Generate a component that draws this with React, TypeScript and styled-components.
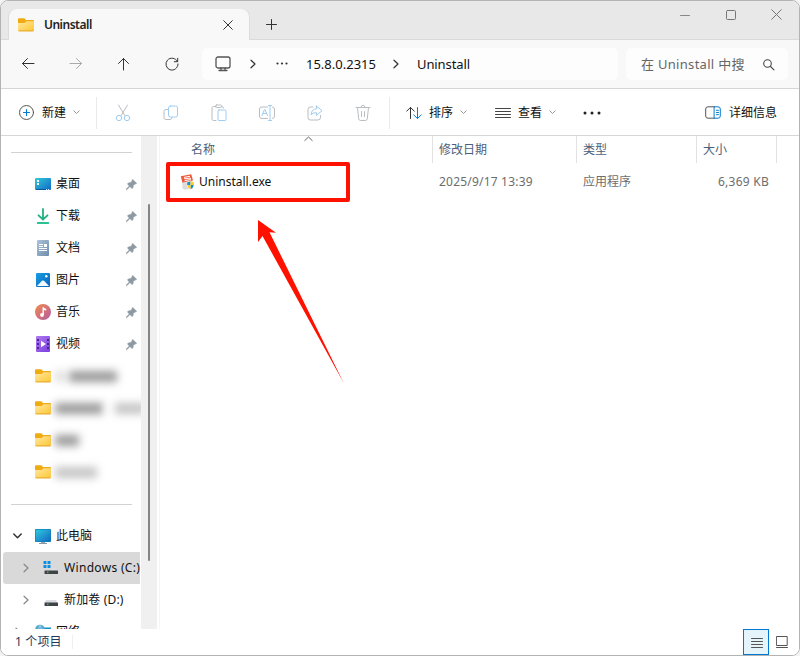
import React from "react";
import styled, { createGlobalStyle } from "styled-components";

const Global = createGlobalStyle`
  * { box-sizing: border-box; }
  html, body { margin: 0; padding: 0; background: #f4f4f4; }
  body { font-family: "Noto Sans", "Noto Sans CJK SC", sans-serif; font-size: 12px; color: #111; overflow: hidden; }
  svg { display: block; flex: none; }
`;

const Window = styled.div`
  position: relative;
  width: 800px;
  height: 656px;
  display: flex;
  flex-direction: column;
  border: 1px solid #b3b3b3;
  border-radius: 8px;
  background: #fff;
  overflow: hidden;
`;

const Text = styled.span<{ $size?: number; $color?: string; $space?: number; $weight?: number }>`
  font-size: ${(p) => p.$size ?? 12}px;
  color: ${(p) => p.$color ?? "#111"};
  letter-spacing: ${(p) => p.$space ?? 0}px;
  font-weight: ${(p) => p.$weight ?? 400};
  line-height: 20px;
  white-space: nowrap;
`;

/* Title strip */
const TitleBar = styled.div`
  display: flex;
  flex: none;
  height: 39px;
  background: #e8e8e8;
  box-shadow: inset 0 -1px #dadada;
  padding-left: 8px;
`;
const Tab = styled.div`
  display: flex;
  align-items: center;
  width: 240px;
  height: 31px;
  margin-top: 8px;
  padding: 0 16px 0 9px;
  border-radius: 8px 8px 0 0;
  background: #f8f8f8;
  box-shadow: 1px 0 #dcdcdc, -1px 0 #dcdcdc;
  gap: 10px;
`;
const TabTitle = styled.div`
  flex: 1;
  display: flex;
`;
const AddTab = styled.div`
  margin: 18px 0 0 17px;
`;
const WindowControls = styled.div`
  display: flex;
  gap: 34px;
  margin: 8px 17px 0 auto;
`;

/* Navigation */
const NavBar = styled.div`
  display: flex;
  flex: none;
  align-items: center;
  height: 49px;
  background: #f8f8f8;
  border-bottom: 1px solid #d5d5d5;
`;
const NavButtons = styled.div`
  display: flex;
  width: 201px;
  padding-left: 19px;
  gap: 32px;
`;
const Address = styled.div`
  display: flex;
  align-items: center;
  width: 416px;
  height: 32px;
  padding-left: 13px;
  border-radius: 5px;
  background: #fdfdfd;
`;
const Crumb = styled.div<{ $w: number }>`
  display: flex;
  flex: none;
  align-items: center;
  width: ${(p) => p.$w}px;
`;
const Search = styled.div`
  display: flex;
  align-items: center;
  justify-content: space-between;
  width: 162px;
  height: 32px;
  margin-left: 8px;
  padding: 0 13px 0 15px;
  border-radius: 5px;
  background: #fdfdfd;
`;

/* Commands */
const Toolbar = styled.div`
  display: flex;
  flex: none;
  align-items: center;
  height: 47px;
  border-bottom: 1px solid #d6d6d6;
  padding: 1px 22px 0 0;
`;
const Command = styled.div<{ $w?: number; $pad?: number; $gap?: number }>`
  display: flex;
  flex: none;
  align-items: center;
  gap: ${(p) => p.$gap ?? 7}px;
  width: ${(p) => (p.$w ? `${p.$w}px` : "auto")};
  padding-left: ${(p) => p.$pad ?? 0}px;
`;
const Caption = styled.div`
  display: flex;
  padding-top: 1px;
`;
const ToolDivider = styled.div`
  width: 1px;
  height: 32px;
  background: #eaeaea;
`;
const EditTools = styled.div`
  display: flex;
  width: 292px;
  justify-content: space-between;
  padding: 1px 17px 0 17px;
`;
const Details = styled.div`
  display: flex;
  align-items: center;
  gap: 8px;
  margin-left: auto;
`;

/* Body */
const Body = styled.div`
  display: flex;
  height: 493px;
  flex: none;
`;
const Sidebar = styled.div`
  width: 140px;
  overflow: hidden;
  flex: none;
`;
const Separator = styled.div`
  height: 32px;
  padding: 16px 9px 0 10px;
  &::before { content: ""; display: block; height: 1px; background: #d2d2d2; }
`;
const PlaceRow = styled.div<{ $selected?: boolean; $pad?: number; $gap?: number }>`
  display: flex;
  align-items: center;
  height: 32px;
  margin: 0 1px 0 2px;
  padding-left: ${(p) => p.$pad ?? 32}px;
  gap: ${(p) => p.$gap ?? 5}px;
  border-radius: 3px 0 0 3px;
  background: ${(p) => (p.$selected ? "#d9d9d9" : "transparent")};
  white-space: nowrap;
`;
const PinSlot = styled.div`
  margin: 1px 3px 0 auto;
`;
const Smudge = styled.div<{ $w: number; $tone: string }>`
  width: ${(p) => p.$w}px;
  height: 11px;
  background: ${(p) => p.$tone};
  filter: blur(4px);
  flex: none;
`;
const ScrollTrack = styled.div`
  display: flex;
  width: 16px;
  padding: 68px 0 0 7px;
  background: #f0f0f0;
  flex: none;
`;
const ScrollThumb = styled.div`
  width: 2px;
  height: 357px;
  border-radius: 1px;
  background: #858585;
`;
const Files = styled.div`
  flex: 1;
  margin-left: 2px;
  border-left: 1px solid #f5f5f5;
`;
const Header = styled.div`
  position: relative;
  display: grid;
  grid-template-columns: 273px 144px 120px 80px;
  height: 27px;
`;
const HeaderCell = styled.div<{ $pad?: number }>`
  display: flex;
  align-items: center;
  padding-left: ${(p) => p.$pad ?? 6}px;
  border-right: 1px solid #e2e2e2;
`;
const SortMark = styled.div`
  position: absolute;
  left: 144px;
  top: 0;
`;
const FileRow = styled.div`
  display: grid;
  grid-template-columns: 273px 144px 120px 80px;
  align-items: center;
  height: 32px;
  margin-top: 3px;
`;
const FileCell = styled.div<{ $pad?: number; $end?: boolean }>`
  display: flex;
  align-items: center;
  gap: 3px;
  padding-left: ${(p) => p.$pad ?? 6}px;
  padding-right: ${(p) => (p.$end ? 8 : 0)}px;
  justify-content: ${(p) => (p.$end ? "flex-end" : "flex-start")};
`;
const Highlight = styled.div`
  position: absolute;
  left: 165px;
  top: 161px;
  width: 184px;
  height: 40px;
  border: 4px solid #ff1100;
  border-radius: 2px;
`;
const Pointer = styled.svg`
  position: absolute;
  left: 256px;
  top: 217px;
`;

/* Status */
const StatusBar = styled.div`
  display: flex;
  height: 26px;
  align-items: center;
  padding-left: 14px;
  background: #fff;
`;
const StatusDivider = styled.div`
  width: 1px;
  height: 14px;
  margin-left: 10px;
  background: #efefef;
`;
const ViewButton = styled.div<{ $active?: boolean }>`
  display: flex;
  align-items: center;
  justify-content: center;
  width: 26px;
  height: 26px;
  padding-left: ${(p) => (p.$active ? 2 : 0)}px;
  background: ${(p) => (p.$active ? "#e5f3fb" : "transparent")};
  border: ${(p) => (p.$active ? "1px solid #0078d4" : "none")};
`;
const Views = styled.div`
  display: flex;
  margin-left: auto;
  padding-right: 4px;
`;

type IconProps = { w?: number; h?: number; c?: string; sw?: number; children: React.ReactNode };
const Icon = ({ w = 18, h = w, c = "#333", sw = 1, children }: IconProps) => (
  <svg width={w} height={h} viewBox={`0 0 ${w} ${h}`} fill="none" stroke={c} strokeWidth={sw} strokeLinecap="round" strokeLinejoin="round">
    {children}
  </svg>
);

const Folder = () => (
  <svg width="16" height="14" viewBox="0 0 16 14">
    <defs>
      <linearGradient id="folder" x1="0" y1="0" x2="1" y2="1">
        <stop offset="0" stopColor="#ffe7a0" />
        <stop offset="1" stopColor="#ffc832" />
      </linearGradient>
    </defs>
    <path d="M0 1.3Q0 .3 1 .3h5.400L8 2h7q1 0 1 1v3H0z" fill="#f0ab13" />
    <path d="M0 5h6.600L8.300 3.200H16v9q0 1-1 1H1q-1 0-1-1z" fill="url(#folder)" />
    <path d="M.6 12.900h14.800" stroke="#e0a326" strokeWidth=".9" />
  </svg>
);
const Chevron = ({ c = "#999" }: { c?: string }) => (
  <Icon w={7} h={5} c={c}><path d="M.8.8l2.700 2.700L6.200.8" /></Icon>
);
const Right = ({ c = "#333", s = 1.2 }: { c?: string; s?: number }) => (
  <Icon w={6} h={10} c={c} sw={s}><path d="M1 1.200l4 3.800-4 3.800" /></Icon>
);
const Pin = () => (
  <svg width="11" height="11" viewBox="0 0 11 11">
    <path d="M6.7.5l3.8 3.8-.9.6-.7-.1L7.2 6.6l-.2 2-.9.8-2.2-2L.9 10.5H.4V10l3-3L1.600 4.900l.8-.9 2.200-.2L6.300 2l-.2-.9z" fill="#8d99a3" stroke="#8d99a3" strokeWidth=".8" />
  </svg>
);
const Close = ({ s = 10, c = "#333" }: { s?: number; c?: string }) => (
  <Icon w={s} c={c}><path d={`M.7.7L${s - 0.7} ${s - 0.7}M${s - 0.7} .7L.7 ${s - 0.7}`} /></Icon>
);

const DesktopIcon = () => (
  <svg width="16" height="12" viewBox="0 0 16 12">
    <defs><linearGradient id="desk" x2="1" y2="1"><stop stopColor="#2fcbdc" /><stop offset="1" stopColor="#1268c4" /></linearGradient></defs>
    <rect width="16" height="12" rx="1" fill="url(#desk)" />
    <path d="M2 2h2v2H2zM2 5h2v2H2z" fill="#fff" />
    <path d="M1 11.5h10" stroke="#075a9e" /><path d="M11 11.5h4" stroke="#bfe6ff" strokeDasharray="1 1" />
  </svg>
);
const DownloadIcon = () => (
  <svg width="16" height="16" viewBox="0 0 16 16" fill="none" strokeLinecap="round" strokeLinejoin="round">
    <path d="M8 1v10.2M3.5 7.3L8 11.5l4.5-4.2" stroke="#21b183" strokeWidth="1.8" />
    <path d="M2.7 15h10.6" stroke="#2cc191" strokeWidth="1.8" />
  </svg>
);
const DocumentIcon = () => (
  <svg width="16" height="16" viewBox="0 0 16 16">
    <defs><linearGradient id="doc" x2="1" y2="1"><stop stopColor="#acc3da" /><stop offset="1" stopColor="#6e8cab" /></linearGradient></defs>
    <rect x="2" width="12" height="16" rx="1" fill="url(#doc)" />
    <path d="M4 4.5h4M4 6.500h4M4 8.500h8M4 10.500h8" stroke="#fff" /><path d="M9 4h3v3H9z" fill="#fff" />
  </svg>
);
const PictureIcon = () => (
  <svg width="16" height="14" viewBox="0 0 16 14">
    <defs><linearGradient id="pic" x2="1" y2="1"><stop stopColor="#189fe5" /><stop offset="1" stopColor="#0b62b8" /></linearGradient></defs>
    <rect x="1" width="14" height="14" rx="1" fill="url(#pic)" />
    <path d="M2 13l5-5.2q1-.8 2 0l5 5.2z" fill="#f0f9ff" /><circle cx="11.300" cy="3.300" r="1.200" fill="#fff" />
  </svg>
);
const MusicIcon = () => (
  <svg width="16" height="16" viewBox="0 0 16 16">
    <defs><linearGradient id="music" x2="1" y2="1"><stop stopColor="#f28b4b" /><stop offset="1" stopColor="#b35aa5" /></linearGradient></defs>
    <circle cx="8" cy="8" r="8" fill="url(#music)" />
    <circle cx="7" cy="11" r="1.9" fill="#fff" /><path d="M7.5 3.2h1.3q.2 1.3 2.4 1.5v1.7q-1.2 0-2.3-.7V11H7.5z" fill="#fff" />
  </svg>
);
const VideoIcon = () => (
  <svg width="16" height="16" viewBox="0 0 16 16">
    <defs><linearGradient id="vid" x2="1" y2="1"><stop stopColor="#b07bf0" /><stop offset="1" stopColor="#7b3bdc" /></linearGradient></defs>
    <rect x="1" width="14" height="16" rx="1" fill="url(#vid)" />
    <path d="M3 3v12M13 3v12" stroke="#43218d" strokeWidth="1.8" strokeDasharray="2 2" /><path d="M6 4.800v6.400L11 8z" fill="#fff" />
  </svg>
);
const PcIcon = () => (
  <svg width="16" height="16" viewBox="0 0 16 16">
    <path d="M6 12h4v3H6z" fill="#9aa8b5" /><path d="M4 15.5h8" stroke="#8797a6" />
    <rect y="1" width="16" height="13" rx=".8" fill="#0d7fb6" />
    <rect x=".7" y="1.700" width="14.600" height="11.600" fill="url(#desk)" />
  </svg>
);
const DriveIcon = ({ system = false }: { system?: boolean }) => (
  <svg width="16" height="15" viewBox="0 0 16 15">
    <path d="M3 7h10l1.500 3H1.500z" fill="#d9dce0" /><rect x="1.500" y="9.500" width="13.500" height="3.600" rx=".5" fill="#3f4348" />
    <path d="M4 11.200h1.500" stroke="#51e467" />
    {system && <><path d="M0 0h8v9H0z" fill="#d9d9d9" /><path d="M.5 0h3v3h-3zM4.500 0h3v3h-3zM.5 4h3v3h-3zM4.500 4h3v3h-3z" fill="#0d8fe0" /></>}
  </svg>
);
const NetworkIcon = () => (
  <svg width="16" height="16" viewBox="0 0 16 16">
    <rect x="4" y="3.500" width="12" height="9" fill="#138fc5" /><circle cx="5" cy="5.500" r="4.800" fill="#55a9cf" />
    <path d="M5 .7q-3 4.800 0 9.600M5 .7q3 4.800 0 9.600M.3 5.500h9.400" stroke="#b5e0ef" fill="none" strokeWidth=".7" />
  </svg>
);
const InstallerIcon = () => (
  <svg width="16" height="16" viewBox="0 0 16 16">
    <path d="M2 6.800L12 5l1 9.500-8 1.200-2.500-1z" fill="#dcdcdc" />
    <path d="M.8 2.200L11.300.2l1.700 6.300L2.400 8.600z" fill="#f0583a" />
    <path d="M10 2.300l-5.600 1 .4 1.600 5.400-.9.400 1.600-6 1.100" stroke="#fff" fill="none" strokeWidth="1" />
    <path d="M10.500 6.500q1.600 1.200 3.700 1.300v3.500q-.5 3-3.700 4.600Q7.200 14.300 6.800 11.300V7.800q2.200 0 3.700-1.300z" fill="#fff" />
    <path d="M10.500 7v4H7.200V8.200q1.900 0 3.300-1.200zM10.500 11h3.300q-.4 3-3.300 4.300z" fill="#168bd3" />
    <path d="M10.500 7q1.400 1.100 3.300 1.200V11h-3.300zM7.200 11h3.300v4.300Q7.600 14 7.200 11z" fill="#ffc928" />
  </svg>
);

const quickAccess = [
  { name: "桌面", icon: <DesktopIcon /> },
  { name: "下载", icon: <DownloadIcon /> },
  { name: "文档", icon: <DocumentIcon /> },
  { name: "图片", icon: <PictureIcon /> },
  { name: "音乐", icon: <MusicIcon /> },
  { name: "视频", icon: <VideoIcon /> },
];
const hiddenFolders = [
  [{ w: 10, tone: "#ddd" }, { w: 48, tone: "#999" }],
  [{ w: 48, tone: "#999" }, { w: 4, tone: "#fff" }, { w: 30, tone: "#c4c4c4" }],
  [{ w: 24, tone: "#999" }],
  [{ w: 42, tone: "#c4c4c4" }],
];
const gray = "#b9bcc0";
const blue = "#9fcdf1";

export default function App() {
  return (
    <>
      <Global />
      <Window>
        <TitleBar>
          <Tab>
            <Folder />
            <TabTitle><Text $weight={600} $color="#222" $space={-0.5}>Uninstall</Text></TabTitle>
            <Close />
          </Tab>
          <AddTab><Icon w={11}><path d="M5.500.5v10M.5 5.500h10" /></Icon></AddTab>
          <WindowControls>
            <Icon w={12} c="#888"><path d="M1.500 6.500h9" /></Icon>
            <Icon w={12} c="#777"><rect x="1.500" y="1.500" width="9" height="9" rx="1" /></Icon>
            <Close s={11} c="#777" />
          </WindowControls>
        </TitleBar>

        <NavBar>
          <NavButtons>
            <Icon w={16}><path d="M14 7.500H2.500M7.500 2.500l-5 5 5 5" /></Icon>
            <Icon w={16} c="#aaa"><path d="M2 7.500h11.500M8.500 2.500l5 5-5 5" /></Icon>
            <Icon w={16}><path d="M7.500 14V2.500M2.500 7.500l5-5 5 5" /></Icon>
            <Icon w={16}><path d="M13.300 5.300A6 6 0 1 0 14 8M13.700 2.300v3.400h-3.400" /></Icon>
          </NavButtons>
          <Address>
            <Crumb $w={35}>
              <Icon w={16} c="#555" sw={1.3}><rect x="1" y="1" width="14" height="11" rx="2" /><path d="M6 12v2.500M10 12v2.500M4 14.500h8" /></Icon>
            </Crumb>
            <Crumb $w={26}><Right /></Crumb>
            <Crumb $w={30}>
              <svg width="12" height="4" viewBox="0 0 12 4" fill="#333"><circle cx="1.500" cy="1.500" r="1.100" /><circle cx="6" cy="1.500" r="1.100" /><circle cx="10.500" cy="1.500" r="1.100" /></svg>
            </Crumb>
            <Crumb $w={87}><Text $size={13}>15.8.0.2315</Text></Crumb>
            <Crumb $w={24}><Right /></Crumb>
            <Text $size={13} $space={-0.1}>Uninstall</Text>
          </Address>
          <Search>
            <Text $size={13} $color="#666" $space={0.3}>在 Uninstall 中搜</Text>
            <Icon w={13} c="#444" sw={1.1}><circle cx="5.500" cy="5.500" r="3.800" /><path d="M8.500 8.500l3.500 3.300" /></Icon>
          </Search>
        </NavBar>

        <Toolbar>
          <Command $w={95} $pad={17}>
            <Icon w={17} c="#555"><circle cx="8.500" cy="8.500" r="7" /><path d="M8.500 5.500v6M5.500 8.500h6" stroke="#087bd0" strokeWidth="1.200" /></Icon>
            <Caption><Text>新建</Text></Caption>
            <Chevron />
          </Command>
          <ToolDivider />
          <EditTools>
            <Icon w={18} c={gray}><path d="M4.500 1l6.300 10.500M13.500 1L7.200 11.500" /><circle cx="5" cy="14" r="2.700" stroke={blue} /><circle cx="13" cy="14" r="2.700" stroke={blue} /></Icon>
            <Icon w={18} c={gray}><path d="M5.500 5.500H4q-2 0-2 2v6q0 2 2 2h4q2 0 2-2" /><rect x="6.500" y="2" width="9" height="11" rx="2" stroke={blue} /></Icon>
            <Icon w={18} c={gray}><path d="M6 2.500H3.500q-1.500 0-1.500 1.500v11q0 1.500 1.500 1.500H6M12 2.500q1.500 0 1.500 1.500" /><rect x="5.500" y="1" width="6" height="2.500" rx="1" /><rect x="8" y="6" width="8" height="10.500" rx="1" stroke={blue} /></Icon>
            <Icon w={18} c={gray}><path d="M9.500 3H4Q1.500 3 1.500 5v7q0 2.500 2.500 2.500h5.500M14.500 3q2 0 2 2v7q0 2.500-2 2.500" /><path d="M10.500 1.500h3M12 1.500v15M10.500 16.500h3M4 11.500l2.500-6h.5l2.500 6M5 9.500h3.700" stroke={blue} /></Icon>
            <Icon w={18} c={gray}><path d="M7 3H4.500Q2 3 2 5.500v8q0 2.500 2.500 2.500H12q2.500 0 2.500-2.500v-2" /><path d="M10.500 2L16 6.700l-5.500 4.600V8.700q-3.500-.2-5.500 2Q5.600 4.900 10.500 4.700z" stroke={blue} /></Icon>
            <Icon w={18} c={gray}><path d="M2 3.500h14M3.500 3.500l1.200 11.200q.2 1.800 2 1.800h4.600q1.800 0 2-1.800l1.200-11.200M7 3.500Q7 1.200 9 1.200t2 2.300M7.500 7.500v5M10.500 7.500v5" /></Icon>
          </EditTools>
          <ToolDivider />
          <Command $w={105} $pad={16}>
            <Icon w={16}><path d="M4.500 13.500V2.500M.7 6.200l3.800-3.800 3.800 3.800" /><path d="M11.500 2.500v11M7.700 9.800l3.800 3.800 3.800-3.800" stroke="#087bd0" /></Icon>
            <Caption><Text>排序</Text></Caption>
            <Chevron />
          </Command>
          <Command $w={88}>
            <Icon w={16} c="#444"><path d="M.5 3.500h15M.5 6.500h15M.5 9.500h15M.5 12.500h15" /></Icon>
            <Caption><Text>查看</Text></Caption>
            <Chevron />
          </Command>
          <svg width="18" height="4" viewBox="0 0 18 4" fill="#222"><circle cx="2" cy="2" r="1.500" /><circle cx="9" cy="2" r="1.500" /><circle cx="16" cy="2" r="1.500" /></svg>
          <Details>
            <Icon w={16} h={13} c="#555"><path d="M9.500.8H3Q.7.8.7 3v7Q.7 12.200 3 12.200h6.500" /><path d="M9.500.8H13q2.300 0 2.300 2.200v7q0 2.200-2.300 2.200H9.500zM11.500 4.300h2M11.500 6.500h2M11.500 8.700h2" stroke="#087bd0" /></Icon>
            <Caption><Text>详细信息</Text></Caption>
          </Details>
        </Toolbar>

        <Body>
          <Sidebar>
            <Separator />
            {quickAccess.map((place) => (
              <PlaceRow key={place.name}>
                {place.icon}
                <Text>{place.name}</Text>
                <PinSlot><Pin /></PinSlot>
              </PlaceRow>
            ))}
            {hiddenFolders.map((parts, index) => (
              <PlaceRow key={index} $gap={4}>
                <Folder />
                {parts.map((part, n) => <Smudge key={n} $w={part.w} $tone={part.tone} />)}
              </PlaceRow>
            ))}
            <Separator />
            <PlaceRow $pad={10} $gap={5}>
              <Command $w={17}><Icon w={9} h={6} sw={1.5}><path d="M.8 1l3.700 3.700L8.200 1" /></Icon></Command>
              <PcIcon />
              <Text>此电脑</Text>
            </PlaceRow>
            <PlaceRow $selected $pad={20} $gap={5}>
              <Command $w={15}><Right c="#888" /></Command>
              <DriveIcon system />
              <Text $space={0.32}>Windows (C:)</Text>
            </PlaceRow>
            <PlaceRow $pad={20} $gap={5}>
              <Command $w={15}><Right c="#888" /></Command>
              <DriveIcon />
              <Text $space={0.15}>新加卷 (D:)</Text>
            </PlaceRow>
            <PlaceRow $pad={12} $gap={5}>
              <Command $w={15}><Right c="#888" /></Command>
              <NetworkIcon />
              <Text>网络</Text>
            </PlaceRow>
          </Sidebar>
          <ScrollTrack><ScrollThumb /></ScrollTrack>
          <Files>
            <Header>
              <HeaderCell $pad={31}><Text $color="#4c607a">名称</Text></HeaderCell>
              <HeaderCell><Text $color="#4c607a">修改日期</Text></HeaderCell>
              <HeaderCell><Text $color="#4c607a">类型</Text></HeaderCell>
              <HeaderCell><Text $color="#4c607a">大小</Text></HeaderCell>
              <SortMark><Icon w={9} h={6} c="#666"><path d="M.8 4.500l3.700-3.500 3.700 3.500" /></Icon></SortMark>
            </Header>
            <FileRow>
              <FileCell $pad={20}><InstallerIcon /><Text>Uninstall.exe</Text></FileCell>
              <FileCell><Text $color="#6d6d6d" $space={0.2}>2025/9/17 13:39</Text></FileCell>
              <FileCell><Text $color="#6d6d6d">应用程序</Text></FileCell>
              <FileCell $end><Text $color="#6d6d6d" $space={0.25}>6,369 KB</Text></FileCell>
            </FileRow>
          </Files>
        </Body>

        <StatusBar>
          <Text $color="#1e395b" $space={0.15}>1 个项目</Text>
          <StatusDivider />
          <Views>
            <ViewButton $active><Icon w={12} c="#555"><path d="M.5 2.500h11M.5 5.500h11M.5 8.500h11M.5 11.500h11" /></Icon></ViewButton>
            <ViewButton><Icon w={12} h={12} c="#555"><path d="M.8.5h10.400v9H.8zM.5 11.500h11" /></Icon></ViewButton>
          </Views>
        </StatusBar>
        <Highlight />
        <Pointer width="90" height="170" viewBox="257 218 90 170" fill="#ff1100">
          <path d="M258 220l18 12.700-6.500-.4L344 383.500 262.500 236l-4.500 6z" />
        </Pointer>
      </Window>
    </>
  );
}
